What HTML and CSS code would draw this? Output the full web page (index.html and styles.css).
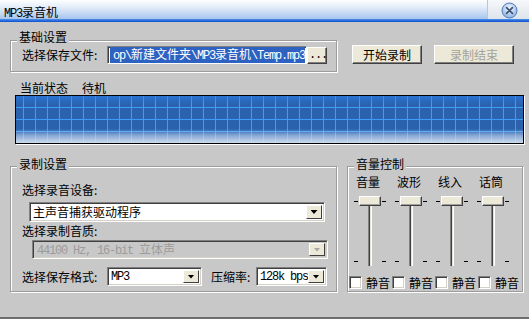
FILE: index.html
```html
<!DOCTYPE html>
<html lang="zh-CN">
<head>
    <meta charset="UTF-8">
    <meta name="viewport" content="width=device-width, initial-scale=1.0">
    <title>MP3录音机</title>
    <link rel="stylesheet" href="styles.css">
</head>
<body>
    <div class="window">
        <div class="titlebar">
            <span class="title"><span class="mono">MP3</span>录音机</span>
            <div class="close-area">
                <svg class="close" width="17" height="17" viewBox="0 0 17 17">
                    <defs>
                        <radialGradient id="closeFill" cx="50%" cy="35%" r="65%">
                            <stop offset="0" stop-color="#f2f7fe"/>
                            <stop offset="1" stop-color="#8db3e4"/>
                        </radialGradient>
                    </defs>
                    <circle cx="8.5" cy="8.5" r="7.5" fill="url(#closeFill)" stroke="#4d79b6"/>
                    <path d="M5.6 5.6l5.8 5.8M11.4 5.6l-5.8 5.8" stroke="#3f5270" stroke-width="1.7" stroke-linecap="round"/>
                </svg>
            </div>
        </div>

        <div class="top-row">
            <div class="group basic">
                <div class="group-title">基础设置</div>
                <div class="file-row">
                    <span class="label">选择保存文件:</span>
                    <div class="path">
                        <span class="selected mono">op\<span class="cjk">新建文件夹</span>\MP3<span class="cjk">录音机</span>\Temp.mp3</span>
                    </div>
                    <button class="browse mono">...</button>
                </div>
            </div>
            <div class="actions">
                <button class="btn start">开始录制</button>
                <button class="btn stop" disabled>录制结束</button>
            </div>
        </div>

        <div class="status">
            <span>当前状态</span>
            <span>待机</span>
        </div>
        <div class="scope"></div>

        <div class="bottom-row">
            <div class="group rec">
                <div class="group-title">录制设置</div>
                <div class="rec-label first">选择录音设备:</div>
                <div class="combo device">
                    <span class="combo-text">主声音捕获驱动程序</span>
                    <span class="drop"></span>
                </div>
                <div class="rec-label">选择录制音质:</div>
                <div class="combo quality disabled">
                    <span class="combo-text mono">44100 Hz, 16-bit <span class="cjk">立体声</span></span>
                    <span class="drop"></span>
                </div>
                <div class="format-row">
                    <span class="label">选择保存格式:</span>
                    <div class="combo format">
                        <span class="combo-text mono">MP3</span>
                        <span class="drop"></span>
                    </div>
                    <span class="rate-label">压缩率:</span>
                    <div class="combo rate">
                        <span class="combo-text mono">128k bps</span>
                        <span class="drop"></span>
                    </div>
                </div>
            </div>

            <div class="group vol">
                <div class="group-title">音量控制</div>
                <div class="channels">
                    <div class="channel">
                        <div class="channel-name">音量</div>
                        <div class="slider">
                            <span class="tick top left"></span><span class="tick top right"></span>
                            <span class="thumb"></span>
                            <span class="track"></span>
                            <span class="tick bottom left"></span><span class="tick bottom right"></span>
                        </div>
                    </div>
                    <div class="channel">
                        <div class="channel-name">波形</div>
                        <div class="slider">
                            <span class="tick top left"></span><span class="tick top right"></span>
                            <span class="thumb"></span>
                            <span class="track"></span>
                            <span class="tick bottom left"></span><span class="tick bottom right"></span>
                        </div>
                    </div>
                    <div class="channel">
                        <div class="channel-name">线入</div>
                        <div class="slider">
                            <span class="tick top left"></span><span class="tick top right"></span>
                            <span class="thumb"></span>
                            <span class="track"></span>
                            <span class="tick bottom left"></span><span class="tick bottom right"></span>
                        </div>
                    </div>
                    <div class="channel">
                        <div class="channel-name">话筒</div>
                        <div class="slider">
                            <span class="tick top left"></span><span class="tick top right"></span>
                            <span class="thumb"></span>
                            <span class="track"></span>
                            <span class="tick bottom left"></span><span class="tick bottom right"></span>
                        </div>
                    </div>
                </div>
                <div class="mutes">
                    <label class="mute"><span class="box"></span>静音</label>
                    <label class="mute"><span class="box"></span>静音</label>
                    <label class="mute"><span class="box"></span>静音</label>
                    <label class="mute"><span class="box"></span>静音</label>
                </div>
            </div>
        </div>
    </div>
</body>
</html>
```

FILE: styles.css
```css
:root {
    --bg: #c8c8c8;
    --face: #ece9d8;
    --shadow: #808080;
    --dark: #404040;
    --font-ui: "Noto Sans CJK SC", sans-serif;
    --font-mono: "Liberation Mono", "Noto Sans CJK SC", monospace;
}

* {
    box-sizing: border-box;
}

body {
    margin: 0;
    background: var(--bg);
    font-family: var(--font-ui);
    font-size: 12px;
    line-height: 12px;
    color: #000;
    overflow: hidden;
}

.mono {
    font-family: var(--font-mono);
    letter-spacing: -1.2px;
}

.mono .cjk {
    font-family: var(--font-ui);
    letter-spacing: 0;
}

.window {
    width: 529px;
    height: 319px;
    display: flex;
    flex-direction: column;
    border-bottom: 2px solid #6e6e6e;
}

/* title bar */
.titlebar {
    height: 22px;
    flex: none;
    display: flex;
    background: linear-gradient(to bottom, #fdfeff 0, #e4edf9 7px, #c6daf3 13px, #a6c5ee 19px, #4f8fe8 19px, #0a4fd0 22px);
}

.title {
    margin: 6px 0 0 4px;
}

.close-area {
    margin-left: auto;
    width: 42px;
    height: 19px;
    display: flex;
    align-items: center;
    justify-content: center;
    padding: 1px 0 0 2px;
    background: linear-gradient(to bottom, #f6f8fb, #dde4ec);
    border-left: 1px solid #b9c6d6;
}

/* group boxes */
.group {
    border: 1px solid #9c9c9c;
    box-shadow: inset 1px 1px 0 #fff, 1px 1px 0 #fff;
}

.group-title {
    width: fit-content;
    margin: -10px 0 0 6px;
    padding: 0 2px;
    background: var(--bg);
}

.bottom-row .group-title {
    margin-top: -9px;
}

/* top row */
.top-row {
    display: flex;
    align-items: flex-start;
    margin: 18px 0 0 10px;
}

.basic {
    width: 327px;
    padding: 0 0 7px 0;
}

.file-row {
    display: flex;
    align-items: center;
    margin: 3px 0 0 11px;
}

.file-row .label {
    width: 85px;
}

.path {
    width: 200px;
    height: 18px;
    display: flex;
    align-items: center;
    padding: 0 1px 0 2px;
    background: #fff;
    border: 1px solid;
    border-color: var(--shadow) #fff #fff var(--shadow);
    box-shadow: inset 1px 1px 0 var(--dark);
}

.selected {
    flex: 1;
    text-align: right;
    white-space: nowrap;
    background: #2d62c2;
    color: #fff;
    line-height: 13px;
}

.browse {
    width: 20px;
    height: 17px;
    padding: 0 0 0 1px;
    font-size: 12px;
    line-height: 12px;
    background: var(--face);
    border: 1px solid;
    border-color: #fff var(--dark) var(--dark) #fff;
    box-shadow: inset -1px -1px 0 var(--shadow);
}

.actions {
    display: flex;
    gap: 12px;
    margin: 5px 0 0 15px;
}

.btn {
    height: 19px;
    padding: 0;
    font: inherit;
    background: var(--face);
    border: 1px solid;
    border-color: #fff var(--dark) var(--dark) #fff;
    box-shadow: inset -1px -1px 0 var(--shadow);
    color: #000;
}

.start {
    width: 70px;
}

.stop {
    width: 80px;
    color: #a4a29a;
}

/* status + scope */
.status {
    display: flex;
    gap: 14px;
    margin: 10px 0 0 20px;
}

.scope {
    width: 509px;
    height: 49px;
    margin: 1px 0 0 15px;
    border: 1px solid #000;
    box-shadow: 1px 1px 0 #fff;
    background:
        linear-gradient(to bottom, rgba(220, 232, 246, 0) 0, rgba(220, 232, 246, 0) 70%, rgba(196, 214, 236, 0.6) 84%, rgba(214, 226, 240, 0.95) 100%),
        linear-gradient(to bottom, rgba(40, 130, 240, 0.55) 0, rgba(40, 130, 240, 0) 9px),
        repeating-linear-gradient(to right, transparent 0 7px, #3d9ef6 7px 8px, transparent 8px 12px),
        repeating-linear-gradient(to bottom, transparent 0 11px, #3d9ef6 11px 12px),
        #2a62ae;
}

/* bottom row */
.bottom-row {
    display: flex;
    gap: 10px;
    margin: 22px 0 0 10px;
}

.rec {
    width: 327px;
    height: 126px;
}

.vol {
    width: 176px;
    height: 126px;
}

.rec-label {
    margin: 3px 0 0 11px;
}

.rec-label.first {
    margin-top: 14px;
}

.combo {
    display: flex;
    align-items: center;
    padding: 2px;
    background: #fff;
    border: 1px solid;
    border-color: var(--shadow) #fff #fff var(--shadow);
    box-shadow: inset 1px 1px 0 var(--dark), inset -1px -1px 0 #d4d0c8;
}

.combo-text {
    flex: 1;
    padding-left: 1px;
    white-space: nowrap;
}

.drop {
    width: 16px;
    align-self: stretch;
    display: flex;
    align-items: center;
    justify-content: center;
    background: var(--face);
    border: 1px solid;
    border-color: #fff var(--dark) var(--dark) #fff;
}

.drop::after {
    content: "";
    width: 7px;
    height: 4px;
    background: #000;
    clip-path: polygon(0 0, 100% 0, 50% 100%);
}

.device {
    width: 296px;
    height: 20px;
    margin: 6px 0 0 18px;
}

.quality {
    width: 296px;
    height: 19px;
    margin: 3px 0 0 21px;
}

.combo.disabled {
    background: var(--bg);
    color: #9c9c9c;
}

.combo.disabled .combo-text {
    padding-left: 2px;
}

.combo.disabled .drop::after {
    background: #a8a8a8;
}

.format-row {
    display: flex;
    align-items: center;
    margin: 8px 0 0 11px;
}

.format-row .label {
    width: 85px;
}

.format {
    width: 95px;
    height: 19px;
}

.rate-label {
    margin-left: 9px;
    width: 45px;
}

.rate {
    width: 71px;
    height: 19px;
}

/* volume sliders */
.channels {
    display: grid;
    grid-template-columns: repeat(4, 41px);
    margin: 6px 0 0 4px;
}

.channel-name {
    padding-left: 4px;
}

.slider {
    position: relative;
    height: 70px;
    margin-top: 8px;
}

.thumb {
    display: block;
    width: 22px;
    height: 10px;
    margin-left: 7px;
    background: var(--face);
    border: 1px solid;
    border-color: #fff var(--dark) var(--dark) #fff;
    box-shadow: inset -1px -1px 0 #a0a0a0;
}

.track {
    display: block;
    width: 4px;
    height: 60px;
    margin-left: 16px;
    background: #e4e2da;
    border-left: 1px solid var(--shadow);
    border-right: 1px solid #fff;
    box-shadow: inset 1px 0 0 var(--dark);
}

.tick {
    position: absolute;
    width: 4px;
    height: 1px;
    background: #000;
}

.tick.top {
    top: 5px;
}

.tick.bottom {
    top: 65px;
}

.tick.left {
    left: 2px;
}

.tick.right {
    left: 30px;
}

.mutes {
    display: flex;
    margin: 10px 0 0 1px;
}

.mute {
    width: 43px;
    display: flex;
    align-items: center;
    gap: 4px;
}

.box {
    width: 13px;
    height: 13px;
    background: #fff;
    border: 1px solid;
    border-color: var(--shadow) #fff #fff var(--shadow);
    box-shadow: inset 1px 1px 0 var(--dark), inset -1px -1px 0 #d4d0c8;
}
```
